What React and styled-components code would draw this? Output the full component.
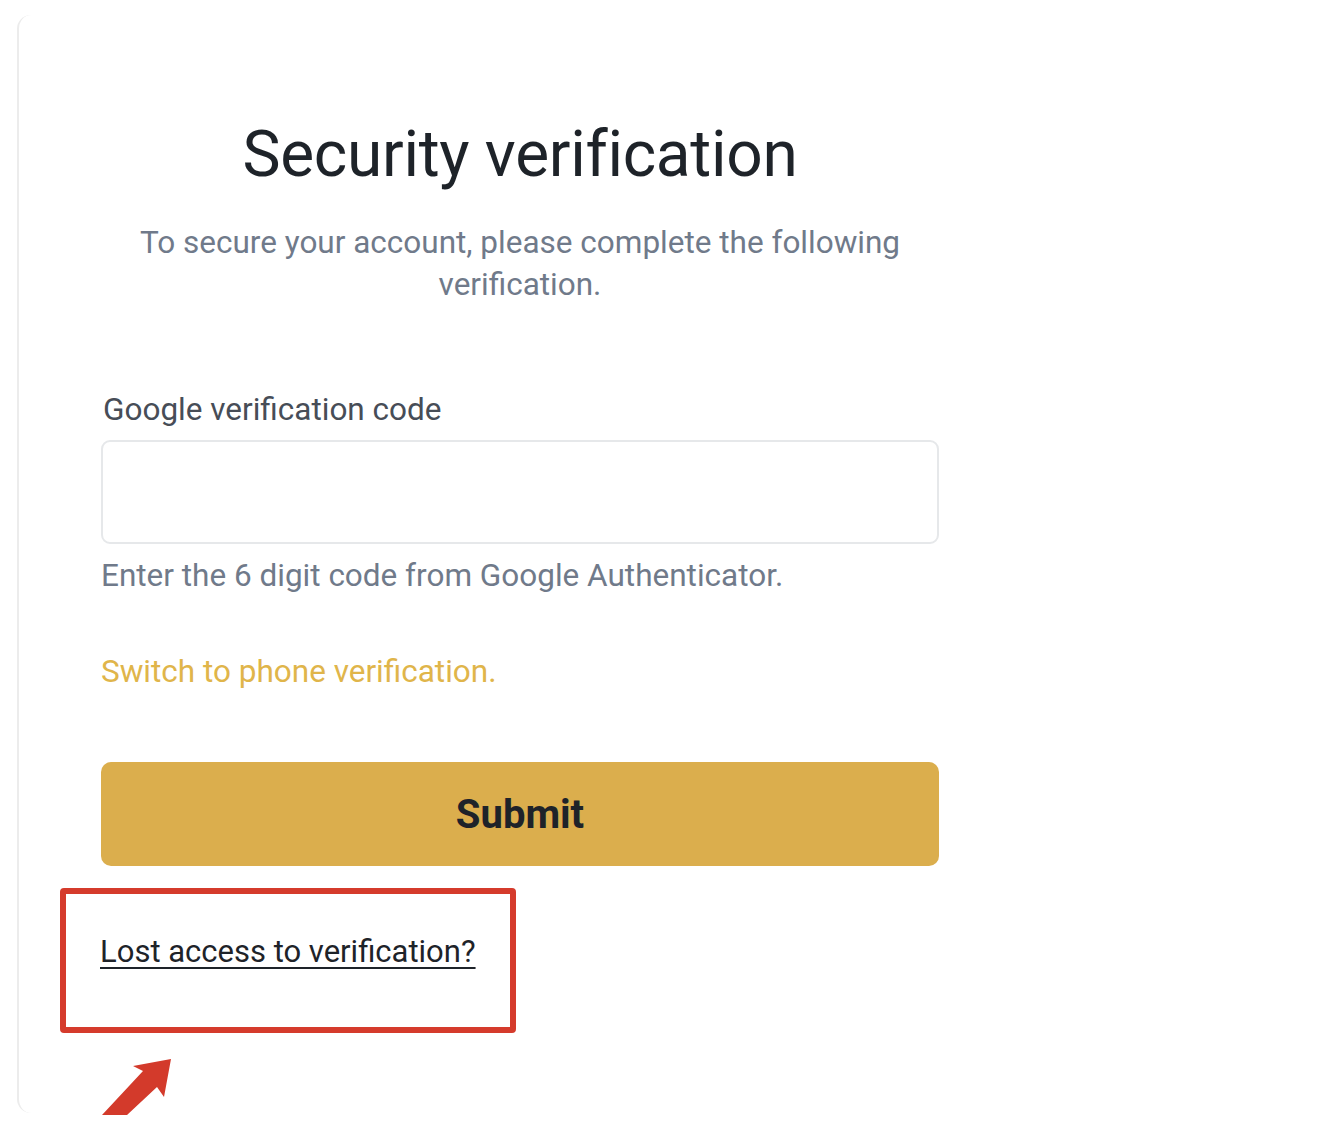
import React from 'react'
import styled, { createGlobalStyle } from 'styled-components'

const Global = createGlobalStyle`
	html, body {
		margin: 0;
		padding: 0;
		background: #ffffff;
	}
	body {
		font-family: Roboto, "Noto Sans", sans-serif;
		color: #1e2329;
	}
`

const Page = styled.div`
	width: 1326px;
	height: 1126px;
	overflow: hidden;
	padding: 15px 0 0 17px;
	box-sizing: border-box;
`

const Card = styled.section`
	position: relative;
	width: 1000px;
	height: 1098px;
	box-sizing: border-box;
	border-left: 2px solid #ececec;
	border-radius: 14px 0 0 14px;
	padding: 100px 78px 0 82px;
	display: flex;
	flex-direction: column;
`

const Title = styled.h1`
	margin: 0;
	font-size: 64px;
	font-weight: 400;
	line-height: 80px;
	text-align: center;
	color: #1e2329;
	letter-spacing: -0.3px;
`

const Subtitle = styled.p`
	margin: 27px auto 0;
	max-width: 800px;
	font-size: 31.5px;
	line-height: 42px;
	text-align: center;
	color: #707a8a;
`

const Field = styled.div`
	margin-top: 84px;
	display: flex;
	flex-direction: column;
`

const Label = styled.label`
	font-size: 31.5px;
	line-height: 40px;
	color: #474d57;
	padding-left: 2px;
`

const Input = styled.input`
	margin-top: 10px;
	height: 104px;
	box-sizing: border-box;
	border: 2px solid #e6e8ea;
	border-radius: 9px;
	background: #fff;
	font-size: 28px;
	outline: none;
`

const Hint = styled.div`
	margin-top: 12px;
	font-size: 31.5px;
	line-height: 40px;
	color: #707a8a;
`

const SwitchLink = styled.a`
	margin-top: 56px;
	font-size: 31.5px;
	line-height: 40px;
	color: #e0b54a;
	text-decoration: none;
	align-self: flex-start;
`

const SubmitButton = styled.button`
	margin-top: 70px;
	height: 104px;
	border: none;
	border-radius: 10px;
	background: #dbae4d;
	font-family: Roboto, "Noto Sans", sans-serif;
	font-size: 40px;
	font-weight: 700;
	color: #1e2329;
`

const Highlight = styled.div`
	margin: 22px 0 0 -41px;
	width: 456px;
	height: 145px;
	box-sizing: border-box;
	border: 6px solid #d53b2c;
	border-radius: 4px;
	padding: 38px 0 0 34px;
`

const LostLink = styled.a`
	font-size: 31px;
	line-height: 40px;
	color: #1e2329;
	text-decoration: underline;
	text-underline-offset: 5px;
	text-decoration-thickness: 2px;
`

const Arrow = styled.svg`
	position: absolute;
	left: 80px;
	top: 1040px;
`

export default function App() {
	return (
		<Page>
			<Global />
			<Card>
				<Title>Security verification</Title>
				<Subtitle>To secure your account, please complete the following verification.</Subtitle>
				<Field>
					<Label>Google verification code</Label>
					<Input type="text" />
					<Hint>Enter the 6 digit code from Google Authenticator.</Hint>
				</Field>
				<SwitchLink>Switch to phone verification.</SwitchLink>
				<SubmitButton>Submit</SubmitButton>
				<Highlight>
					<LostLink>Lost access to verification?</LostLink>
				</Highlight>
				<Arrow width="100" height="60" viewBox="0 0 100 60">
					<polygon points="72,4 65,42 58,32 28,60 3,60 44,16 34,11" fill="#d33a2b" />
				</Arrow>
			</Card>
		</Page>
	)
}
